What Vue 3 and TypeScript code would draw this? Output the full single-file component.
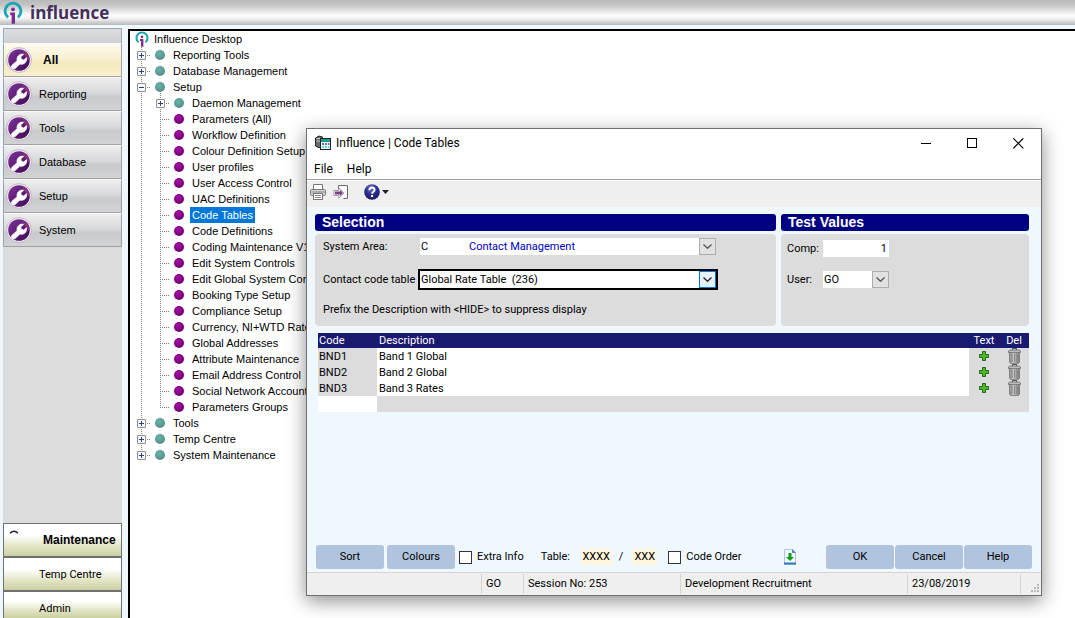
<script setup lang="ts">
import { ref } from 'vue'

interface TreeRow {
  label: string
  level: 1 | 2
  toggle?: 'plus' | 'minus'
  last?: boolean
}

const navItems = ['All', 'Reporting', 'Tools', 'Database', 'Setup', 'System']
const moduleItems = ['Maintenance', 'Temp Centre', 'Admin']

const setupItems = [
  'Parameters (All)', 'Workflow Definition', 'Colour Definition Setup', 'User profiles',
  'User Access Control', 'UAC Definitions', 'Code Tables', 'Code Definitions',
  'Coding Maintenance V10', 'Edit System Controls', 'Edit Global System Controls',
  'Booking Type Setup', 'Compliance Setup', 'Currency, NI+WTD Rates', 'Global Addresses',
  'Attribute Maintenance', 'Email Address Control', 'Social Network Accounts', 'Parameters Groups',
]

const rows: TreeRow[] = [
  { label: 'Reporting Tools', level: 1, toggle: 'plus' },
  { label: 'Database Management', level: 1, toggle: 'plus' },
  { label: 'Setup', level: 1, toggle: 'minus' },
  { label: 'Daemon Management', level: 2, toggle: 'plus' },
  ...setupItems.map((label, i): TreeRow => ({ label, level: 2, last: i === setupItems.length - 1 })),
  { label: 'Tools', level: 1, toggle: 'plus' },
  { label: 'Temp Centre', level: 1, toggle: 'plus' },
  { label: 'System Maintenance', level: 1, toggle: 'plus', last: true },
]

const activeNav = ref('All')
const activeModule = ref('Maintenance')
const selected = ref('Code Tables')

const areaCode = ref('C')
const area = ref('Contact Management')
const codeTable = ref('236')
const comp = ref('1')
const user = ref('GO')
const tableFrom = ref('XXXX')
const tableTo = ref('XXX')
const extraInfo = ref(false)
const codeOrder = ref(false)

const bands = [
  { code: 'BND1', description: 'Band 1 Global' },
  { code: 'BND2', description: 'Band 2 Global' },
  { code: 'BND3', description: 'Band 3 Rates' },
]
</script>

<template>
  <div class="app">
    <svg class="defs" width="0" height="0" aria-hidden="true">
      <defs>
        <radialGradient id="tealBall" cx="40%" cy="35%" r="70%">
          <stop offset="0" stop-color="#6cb0a8" /><stop offset="1" stop-color="#4b8f8c" />
        </radialGradient>
        <radialGradient id="purpleBall" cx="38%" cy="32%" r="70%">
          <stop offset="0" stop-color="#a80ea8" /><stop offset="1" stop-color="#6c0070" />
        </radialGradient>
        <linearGradient id="disc" x1="0" y1="0" x2="1" y2="1">
          <stop offset="0" stop-color="#7b3596" /><stop offset="0.6" stop-color="#5a1a72" /><stop offset="1" stop-color="#3c0c50" />
        </linearGradient>
        <linearGradient id="can" x1="0" x2="1">
          <stop offset="0" stop-color="#8c8c8c" /><stop offset="0.4" stop-color="#c6c6c6" /><stop offset="1" stop-color="#7c7c7c" />
        </linearGradient>
        <radialGradient id="helpDisc" cx="45%" cy="25%" r="80%">
          <stop offset="0" stop-color="#7272c8" /><stop offset="0.5" stop-color="#2c2c8c" /><stop offset="1" stop-color="#1a1a66" />
        </radialGradient>
        <g id="brand">
          <path d="M4.800 15.600A7.600 7.600 0 1 1 14.200 15.600" fill="none" stroke="#16a5b4" stroke-width="2.700" />
          <circle cx="9.500" cy="8" r="1.800" fill="#7a2a92" />
          <path d="M6.800 11h4.600v10.800H8.200V13.600H6.800z" fill="#7a2a92" />
        </g>
      </defs>
    </svg>

    <header class="banner">
      <svg viewBox="0 0 19 22" width="20" height="23" aria-hidden="true"><use href="#brand" /></svg>
      <span class="banner-name">influence</span>
    </header>

    <div class="workspace">
      <nav class="sidebar" aria-label="Sections">
        <div class="side-top"></div>
        <button
          v-for="item in navItems" :key="item" type="button"
          class="nav" :class="{ active: item === activeNav }" @click="activeNav = item"
        >
          <svg viewBox="0 0 26 26" width="26" height="26" aria-hidden="true">
            <circle cx="13" cy="13" r="12.400" fill="#f4eef6" stroke="#b9a9c0" stroke-width="0.800" />
            <circle cx="13" cy="13" r="10.800" fill="url(#disc)" />
            <path d="M16 3.200a10.800 10.800 0 0 1 7.600 11.500L19 9z" fill="#a2477f" opacity="0.600" />
            <path d="M6 18.300l5.200-4.600c-.7-2.600.8-5.600 3.600-6.400 1-.3 2-.2 2.700.1l-2.800 2.400.5 2.500 2.500.8 2.700-2.400c.7 2.800-.9 5.600-3.500 6.300-1.100.3-2.200.2-3-.1l-4.900 4.700c-2.100 1.300-4.500-1.300-3-3.300z" fill="#fff" stroke="#fff" stroke-width="0.900" stroke-linejoin="round" />
          </svg>
          <span>{{ item }}</span>
        </button>
        <div class="side-fill"></div>
        <button
          v-for="item in moduleItems" :key="item" type="button"
          class="module" :class="{ active: item === activeModule }" @click="activeModule = item"
        >
          <svg v-if="item === activeModule" class="module-mark" viewBox="0 0 10 4" width="10" height="4" aria-hidden="true">
            <path d="M1 3.200Q5-.8 9 3.200" fill="none" stroke="#222238" stroke-width="1.400" />
          </svg>
          <span>{{ item }}</span>
        </button>
      </nav>

      <main class="tree">
        <div class="row">
          <span class="cell">
            <svg viewBox="0 0 19 22" width="14" height="16" aria-hidden="true"><use href="#brand" /></svg>
          </span>
          <span class="label">Influence Desktop</span>
        </div>
        <div v-for="r in rows" :key="r.label" class="row">
          <span v-if="r.level === 2" class="cell guide"></span>
          <span class="cell branch" :class="{ end: r.last }">
            <svg v-if="r.toggle" viewBox="0 0 9 9" width="9" height="9" aria-hidden="true">
              <rect x="0.500" y="0.500" width="8" height="8" rx="0.500" fill="#fafafa" stroke="#8f8f8f" />
              <path d="M2 4.500h5" stroke="#2b3f8f" />
              <path v-if="r.toggle === 'plus'" d="M4.500 2v5" stroke="#2b3f8f" />
            </svg>
          </span>
          <span class="cell ball" :class="{ stem: r.toggle === 'minus' }">
            <svg viewBox="0 0 11 11" width="11" height="11" aria-hidden="true">
              <circle cx="5" cy="5" r="5" :fill="r.level === 2 && !r.toggle ? 'url(#purpleBall)' : 'url(#tealBall)'" />
            </svg>
          </span>
          <button type="button" class="label" :class="{ selected: r.label === selected }" @click="selected = r.label">{{ r.label }}</button>
        </div>
      </main>
    </div>

    <section class="dialog" role="dialog" aria-labelledby="dialog-title">
      <div class="titlebar">
        <svg viewBox="0 0 16 16" width="16" height="16" aria-hidden="true">
          <path d="M.5 3Q4-.5 7.500 2v9.500Q4 14 .5 11z" fill="#6e6e6e" stroke="#222" />
          <path d="M1.500 3.500h5M1.500 6h4" stroke="#c8c8c8" />
          <rect x="5.500" y="3.500" width="10" height="11" fill="#e8ffff" stroke="#222" />
          <path d="M6 5.500h9" stroke="#16a08c" stroke-width="3" />
          <path d="M7 9h2M10 9h2M13 9h1.500" stroke="#5030b8" stroke-width="1.500" />
          <path d="M7 12h2M10 12h2M13 12h1.500" stroke="#48c8c0" stroke-width="1.500" />
        </svg>
        <h1 id="dialog-title">Influence | Code Tables</h1>
        <button type="button" class="caption" aria-label="Minimise">
          <svg viewBox="0 0 11 11" width="11" height="11"><path d="M0 5.500h10" stroke="#000" /></svg>
        </button>
        <button type="button" class="caption" aria-label="Maximise">
          <svg viewBox="0 0 11 11" width="11" height="11"><rect x="0.500" y="0.500" width="9" height="9" fill="none" stroke="#000" /></svg>
        </button>
        <button type="button" class="caption" aria-label="Close">
          <svg viewBox="0 0 11 11" width="11" height="11"><path d="M.3.3l10 10M10.300.3l-10 10" stroke="#000" stroke-width="1.100" /></svg>
        </button>
      </div>
      <div class="menubar">
        <button type="button">File</button>
        <button type="button">Help</button>
      </div>
      <div class="toolbar">
        <button type="button" aria-label="Print">
          <svg viewBox="0 0 16 16" width="16" height="16">
            <path d="M3.500 6V.5h9V6" fill="#fff" stroke="#777" />
            <rect x="0.500" y="5.500" width="15" height="6" rx="1" fill="#d4d4d4" stroke="#777" />
            <path d="M1.500 8h13" stroke="#888" />
            <rect x="3.500" y="9.500" width="9" height="6" fill="#fff" stroke="#777" />
            <path d="M5 11.500h6M5 13.500h6" stroke="#888" />
          </svg>
        </button>
        <button type="button" aria-label="Exit">
          <svg viewBox="0 0 16 16" width="16" height="16">
            <path d="M5.500 5V1.500h9v13h-4" fill="#fbfbfb" stroke="#666" />
            <path d="M.8 6.500h5V4l5.200 5-5.200 5v-2.500h-5z" fill="#fff" stroke="#888" stroke-width="0.800" />
            <path d="M2 7.400h5V6l3 3-3 3v-1.400H2z" fill="#7d3a86" />
          </svg>
        </button>
        <button type="button" class="help-tool" aria-label="Help topics">
          <svg viewBox="0 0 16 16" width="16" height="16">
            <circle cx="8" cy="8" r="7.800" fill="url(#helpDisc)" />
            <path d="M5.400 6.200C5.400 2.600 10.800 2.800 10.600 6c-.1 1.700-2.500 1.800-2.500 3.800" fill="none" stroke="#fff" stroke-width="1.900" />
            <rect x="7.100" y="11" width="2" height="2" fill="#fff" />
          </svg>
          <svg viewBox="0 0 7 4" width="7" height="4"><path d="M0 0h7L3.500 4z" fill="#222" /></svg>
        </button>
      </div>

      <div class="content">
        <div class="panels">
          <section class="panel">
            <h2>Selection</h2>
            <div class="panel-body selection">
              <label for="area-code">System Area:</label>
              <div class="field area">
                <input id="area-code" v-model="areaCode" type="text">
                <div class="combo">
                  <select v-model="area" aria-label="System area name"><option>Contact Management</option></select>
                  <span class="arrow"><svg viewBox="0 0 9 5" width="9" height="5"><path d="M.5.5l4 3.800 4-3.800" fill="none" stroke="#555" stroke-width="1.300" /></svg></span>
                </div>
              </div>
              <label for="code-table">Contact code table</label>
              <div class="field focus">
                <div class="combo">
                  <select id="code-table" v-model="codeTable"><option value="236">Global Rate Table&nbsp; (236)</option></select>
                  <span class="arrow"><svg viewBox="0 0 9 5" width="9" height="5"><path d="M.5.5l4 3.800 4-3.800" fill="none" stroke="#222" stroke-width="1.300" /></svg></span>
                </div>
              </div>
              <p>Prefix the Description with &lt;HIDE&gt; to suppress display</p>
            </div>
          </section>
          <section class="panel">
            <h2>Test Values</h2>
            <div class="panel-body tests">
              <label for="comp">Comp:</label>
              <input id="comp" v-model="comp" class="number" type="text">
              <label for="user">User:</label>
              <div class="combo">
                <select id="user" v-model="user"><option>GO</option></select>
                <span class="arrow"><svg viewBox="0 0 9 5" width="9" height="5"><path d="M.5.5l4 3.800 4-3.800" fill="none" stroke="#555" stroke-width="1.300" /></svg></span>
              </div>
            </div>
          </section>
        </div>

        <table class="codes">
          <thead>
            <tr><th class="code">Code</th><th>Description</th><th class="act">Text</th><th class="act">Del</th></tr>
          </thead>
          <tbody>
            <tr v-for="b in bands" :key="b.code">
              <td class="code">{{ b.code }}</td>
              <td class="desc">{{ b.description }}</td>
              <td class="act">
                <button type="button" :aria-label="'Add text to ' + b.code">
                  <svg viewBox="0 0 10 10" width="10" height="10"><path d="M3.500.5h3v3h3v3h-3v3h-3v-3h-3v-3h3z" fill="#58b820" stroke="#1c6a2c" /></svg>
                </button>
              </td>
              <td class="act">
                <button type="button" :aria-label="'Delete ' + b.code">
                  <svg viewBox="0 0 13 16" width="13" height="16">
                    <path d="M4.500 2V.5h4V2" fill="none" stroke="#555" />
                    <path d="M.5 4.500V3L2 2h9l1.500 1v1.500z" fill="#bdbdbd" stroke="#666" stroke-width="0.800" />
                    <path d="M1.500 4.500h10v9.500l-1 1.500h-8l-1-1.500z" fill="url(#can)" stroke="#777" stroke-width="0.800" />
                    <path d="M4 6v8M6.500 6v8M9 6v8" stroke="#777" stroke-width="0.800" />
                  </svg>
                </button>
              </td>
            </tr>
            <tr class="blank"><td></td><td></td><td></td><td></td></tr>
          </tbody>
        </table>

        <div class="actions">
          <button type="button" class="push">Sort</button>
          <button type="button" class="push">Colours</button>
          <label class="check"><input v-model="extraInfo" type="checkbox">Extra Info</label>
          <div class="range">
            <label for="table-from">Table:</label>
            <input id="table-from" v-model="tableFrom" class="four" type="text">
            <span>/</span>
            <input v-model="tableTo" class="three" type="text" aria-label="Table suffix">
          </div>
          <label class="check"><input v-model="codeOrder" type="checkbox">Code Order</label>
          <button type="button" class="export" aria-label="Export">
            <svg viewBox="0 0 14 16" width="14" height="16">
              <path d="M1.500.5h8l3 3v12h-11z" fill="#f2f8fd" stroke="#a8c8e0" />
              <path d="M9.500.5v3h3" fill="#4a88b8" stroke="#4a88b8" />
              <path d="M1 14.500h12" stroke="#2f78bc" stroke-width="2" />
              <path d="M5.500 4h3v4H11l-4 4-4-4h2.500z" fill="#12a012" />
            </svg>
          </button>
          <div class="confirm">
            <button type="button" class="push">OK</button>
            <button type="button" class="push">Cancel</button>
            <button type="button" class="push">Help</button>
          </div>
        </div>
      </div>

      <footer class="status">
        <span class="s-blank"></span>
        <span class="s-user">GO</span>
        <span class="s-session">Session No: 253</span>
        <span class="s-name">Development Recruitment</span>
        <span class="s-date">23/08/2019</span>
        <span class="s-grip">
          <svg viewBox="0 0 8 8" width="8" height="8" aria-hidden="true">
            <path d="M6 0h2v2H6zM3 3h2v2H3zM6 3h2v2H6zM0 6h2v2H0zM3 6h2v2H3zM6 6h2v2H6z" fill="#b8b8b8" />
          </svg>
        </span>
      </footer>
    </section>
  </div>
</template>

<style>
body {
  margin: 0;
  overflow: hidden;
}
</style>

<style scoped>
.app {
  position: relative;
  display: flex;
  flex-direction: column;
  height: 100vh;
  overflow: hidden;
  background: #f0f8ff;
  color: #000;
  font: 11px/16px "Liberation Sans", Arial, sans-serif;
}
.app * {
  box-sizing: border-box;
}
.defs {
  position: absolute;
}
button,
input,
select {
  margin: 0;
  padding: 0;
  border: 0;
  border-radius: 0;
  background: none;
  color: inherit;
  font: inherit;
  appearance: none;
  outline: none;
}
svg {
  display: block;
  flex: none;
}

/* Banner */
.banner {
  display: flex;
  flex: none;
  align-items: center;
  gap: 7px;
  height: 25px;
  padding-left: 3px;
  background: linear-gradient(#bababa 0, #c4c4c4 20%, #fdfdfd 62%, #f0f0f0 75%, #b8b8b8 100%);
}
.banner-name {
  color: #43305c;
  font: bold 17px/24px "Open Sans", sans-serif;
}

/* Sidebar */
.workspace {
  display: flex;
  flex: 1;
  gap: 6px;
  min-height: 0;
  padding: 3px 0 0 3px;
}
.sidebar {
  display: flex;
  flex: none;
  flex-direction: column;
  width: 119px;
  background: #dcdcdc;
}
.side-top {
  flex: none;
  height: 15px;
  border: 1px solid #a5a5ad;
  border-bottom: 0;
  background: linear-gradient(#dcdde0, #cfd0d3);
}
.nav {
  display: flex;
  flex: none;
  align-items: center;
  gap: 7px;
  height: 34px;
  padding-left: 2px;
  border: 1px solid #a0a0a4;
  border-top-color: #f8f8f8;
  background: linear-gradient(#eeeeef, #d8d9db 45%, #c9cacd 60%, #d2d3d5);
  text-align: left;
}
.nav.active {
  background: linear-gradient(#fdfaf0, #f8f0cf 45%, #f4e9bd 60%, #f7efcf);
}
.nav.active span {
  padding-left: 4px;
  font-size: 12px;
  font-weight: bold;
}
.side-fill {
  flex: 1;
}
.module {
  display: flex;
  flex: none;
  gap: 20px;
  height: 34px;
  padding: 9px 0 0 35px;
  border: 1px solid #707074;
  background: linear-gradient(#fff 35%, #e2e4c4 70%, #cbd0a0);
  font-family: Roboto, sans-serif;
  text-align: left;
}
.module.active {
  padding: 8px 0 0 5px;
  font: bold 12px/16px "Liberation Sans", Arial, sans-serif;
}
.module.active span {
  margin-left: 4px;
}
.module-mark {
  margin-top: -2px;
}
.module:last-child {
  height: 27px;
  border-bottom: 0;
}

/* Tree */
.tree {
  flex: 1;
  margin-top: 1px;
  padding-left: 2px;
  border: solid #000;
  border-width: 2px 0 0 2px;
  background: #fff;
}
.row {
  display: flex;
  height: 16px;
}
.cell {
  display: flex;
  flex: none;
  justify-content: center;
  width: 19px;
  height: 16px;
}
.guide,
.stem {
  background: repeating-linear-gradient(#808080 0 1px, #fff 1px 2px) 9px 0 / 1px 16px no-repeat;
}
.branch {
  padding-top: 4px;
  background:
    repeating-linear-gradient(#808080 0 1px, #fff 1px 2px) 9px 0 / 1px 16px no-repeat,
    repeating-linear-gradient(90deg, #808080 0 1px, #fff 1px 2px) 9px 8px / 10px 1px no-repeat;
}
.branch.end {
  background-size: 1px 9px, 10px 1px;
}
.stem {
  background-position: 9px 12px;
}
.ball {
  padding-top: 3px;
}
.label {
  flex: none;
  margin-left: 1px;
  padding: 0 2px;
  white-space: nowrap;
}
.label.selected {
  background: #0078d7;
  color: #fff;
}

/* Dialog window */
.dialog {
  position: absolute;
  inset: 128px 33px 22px 306px;
  display: flex;
  flex-direction: column;
  border: 1px solid #707070;
  background: #f0f8ff;
  box-shadow: 0 5px 18px rgba(0, 0, 0, 0.45);
  font-family: Roboto, "Liberation Sans", sans-serif;
}
.titlebar {
  display: flex;
  flex: none;
  align-items: center;
  height: 30px;
  padding: 0 0 2px 8px;
  background: #fff;
}
.titlebar h1 {
  flex: 1;
  margin: 0 0 0 5px;
  font: 12px/16px Roboto, "Noto Sans", sans-serif;
}
.caption {
  display: flex;
  align-items: center;
  justify-content: center;
  width: 46px;
  height: 28px;
}
.menubar {
  display: flex;
  flex: none;
  gap: 14px;
  height: 21px;
  padding-left: 7px;
  border-bottom: 1px solid #a0a0a0;
  background: #fff;
  font: 12px/20px Roboto, "Noto Sans", sans-serif;
}
.toolbar {
  display: flex;
  flex: none;
  align-items: center;
  gap: 7px;
  height: 27px;
  padding: 0 0 4px 3px;
  border-top: 1px solid #fff;
  background: #efefef;
}
.help-tool {
  display: flex;
  align-items: center;
  gap: 2px;
  margin-left: 8px;
}

/* Panels */
.content {
  display: flex;
  flex: 1;
  flex-direction: column;
  padding: 7px 12px 3px 8px;
}
.panels {
  display: grid;
  grid-template-columns: 461fr 248fr;
  gap: 5px;
}
.panel {
  display: flex;
  flex-direction: column;
  gap: 3px;
}
.panel h2 {
  margin: 0;
  padding-left: 7px;
  border-radius: 3px;
  background: #000080;
  color: #fff;
  font: bold 14px/17px "Liberation Sans", Arial, sans-serif;
}
.panel-body {
  display: grid;
  flex: 1;
  align-content: start;
  align-items: center;
  border-radius: 4px;
  background: #dcdcdc;
}
.selection {
  grid-template-columns: 95px 300px;
  gap: 12px 0;
  padding: 2px 8px 6px;
}
.selection p {
  grid-column: 1 / -1;
  margin: 0;
  padding: 0 0 2px;
}
.tests {
  grid-template-columns: 36px 66px;
  gap: 14px 0;
  padding: 6px;
}
label {
  white-space: nowrap;
}
.field {
  display: flex;
  height: 21px;
  border: 2px solid transparent;
  background: #fff;
  background-clip: padding-box;
}
.field.focus {
  border-color: #000;
}
.area input {
  width: 48px;
  padding-left: 1px;
}
.area .combo select {
  color: #0000c0;
}
.combo {
  display: grid;
  flex: 1;
  height: 17px;
  background: #fff;
}
.combo select {
  grid-area: 1 / 1;
  width: 100%;
  padding: 0 18px 0 1px;
}
.arrow {
  display: flex;
  grid-area: 1 / 1;
  align-items: center;
  justify-content: center;
  justify-self: end;
  width: 17px;
  border: 1px solid #adadad;
  background: #e1e1e1;
  pointer-events: none;
}
.focus .arrow {
  border-color: #0078d7;
  background: #e5f1fb;
}
.number {
  width: 100%;
  height: 17px;
  padding-right: 2px;
  background: #fff;
  text-align: right;
}

/* Code table */
.codes {
  width: calc(100% - 3px);
  margin: 7px 0 0 3px;
  border-collapse: collapse;
  table-layout: fixed;
  background: #dcdcdc;
}
.codes th {
  height: 15px;
  padding: 0 2px;
  background: #191970;
  color: #fff;
  font-weight: normal;
  line-height: 15px;
  text-align: left;
}
.codes td {
  height: 16px;
  padding: 2px 2px 0;
  line-height: 14px;
}
.codes .code {
  width: 59px;
  padding-right: 1px;
  padding-left: 1px;
}
.codes .act {
  width: 30px;
  padding: 0;
  text-align: center;
}
.codes td.desc,
.codes .blank td:first-child {
  background: #fff;
}
.act button {
  display: flex;
  align-items: center;
  justify-content: center;
  width: 100%;
  height: 16px;
}

/* Action row */
.actions {
  display: flex;
  align-items: center;
  margin: auto -3px 0 1px;
}
.push {
  width: 68px;
  height: 24px;
  border-radius: 3px;
  background: #b0c4de;
}
.push + .push {
  margin-left: 3px;
}
.check {
  display: flex;
  align-items: center;
  gap: 5px;
  margin-left: 4px;
}
.check input {
  width: 13px;
  height: 13px;
  border: 1px solid #333;
  background: #fff;
}
.check input:checked {
  background: #333;
}
.range {
  display: flex;
  align-items: center;
  gap: 7px;
  margin: 0 7px 0 17px;
}
.range label {
  width: 33px;
}
.range input {
  height: 16px;
  background: #fff5dc;
  text-align: center;
}
.range .four {
  width: 31px;
}
.range .three {
  width: 25px;
  margin-left: 2px;
}
.export {
  margin-left: 42px;
}
.confirm {
  display: flex;
  gap: 1px;
  margin-left: auto;
}
.confirm .push {
  margin-left: 0;
}

/* Status bar */
.status {
  display: flex;
  flex: none;
  height: 23px;
  padding: 1px 0;
  border-top: 1px solid #d4d4d4;
  background: #efefef;
  line-height: 20px;
}
.status span {
  flex: none;
  padding-left: 4px;
  border-right: 1px solid #d4d4d4;
}
.status .s-blank {
  width: 175px;
}
.status .s-user {
  width: 42px;
}
.status .s-session {
  width: 157px;
}
.status .s-name {
  flex: 1;
}
.status .s-date {
  width: 113px;
}
.status .s-grip {
  display: flex;
  align-items: flex-end;
  justify-content: flex-end;
  width: 20px;
  padding: 0 2px 2px 0;
  border: 0;
}
</style>
